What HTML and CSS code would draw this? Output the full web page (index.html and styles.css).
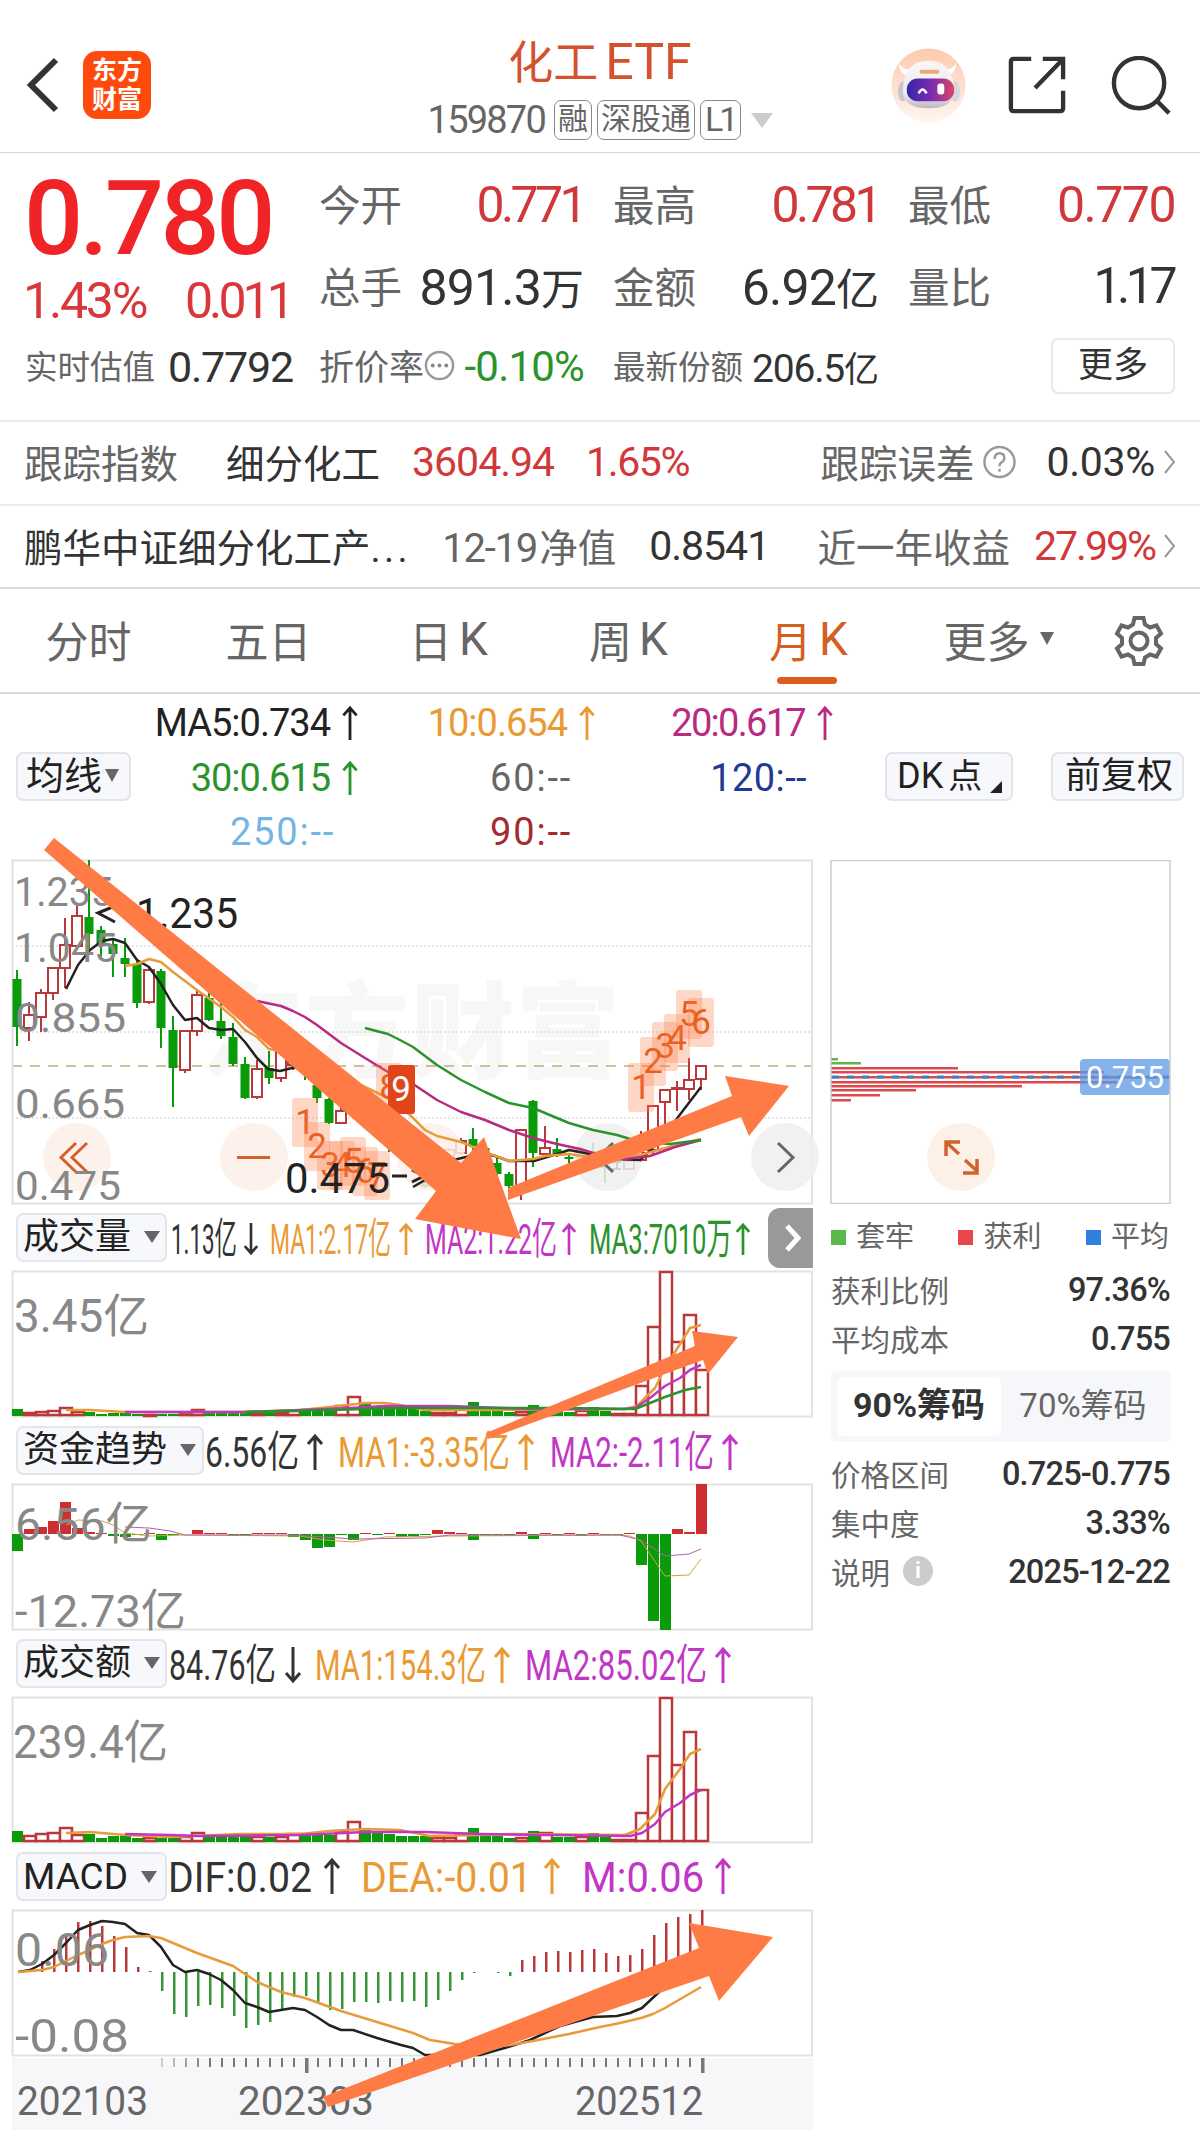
FILE: index.html
```
<!DOCTYPE html>
<html lang="zh-CN">
<head>
  <meta charset="UTF-8">
  <meta name="viewport" content="width=device-width, initial-scale=1.0">
  <title>化工ETF 159870</title>
  <link rel="stylesheet" href="styles.css">
</head>
<body>
  <svg class="defs" width="0" height="0">
    <symbol id="up" viewBox="0 0 18 38"><path d="M9 37V3M2 11L9 3l7 8" fill="none" stroke="currentColor" stroke-width="3"/></symbol>
    <symbol id="down" viewBox="0 0 18 38"><path d="M9 1v34M2 27l7 8 7-8" fill="none" stroke="currentColor" stroke-width="3"/></symbol>
  </svg>

  <header class="header">
    <div class="header-left">
      <svg class="back" viewBox="0 0 32 54"><path d="M29 2L4 27l25 25" fill="none" stroke="#333" stroke-width="6"/></svg>
      <div class="logo"><span>东方</span><span>财富</span></div>
    </div>
    <div class="title">
      <h1>化工<span>ETF</span></h1>
      <div class="code">
        <span class="code-num">159870</span>
        <span class="tag">融</span>
        <span class="tag">深股通</span>
        <span class="tag l1">L1</span>
        <i class="caret-light"></i>
      </div>
    </div>
    <div class="header-right">
      <svg class="robot" viewBox="0 0 76 76">
        <defs>
          <linearGradient id="bg" x1="0" y1="0" x2="0" y2="1"><stop offset="0" stop-color="#fdc9ad"/><stop offset="1" stop-color="#fff6f0"/></linearGradient>
          <linearGradient id="face" x1="0" y1="0" x2="1" y2="0"><stop offset="0" stop-color="#3427a6"/><stop offset=".5" stop-color="#7a2bb0"/><stop offset="1" stop-color="#dc4568"/></linearGradient>
          <linearGradient id="shell" x1="0" y1="0" x2="0" y2="1"><stop offset="0" stop-color="#fbf7f6"/><stop offset=".7" stop-color="#eceaee"/><stop offset="1" stop-color="#bdb8c4"/></linearGradient>
        </defs>
        <circle cx="38" cy="38" r="37.5" fill="url(#bg)"/>
        <path d="M8 16q0 8 6 11l8-5q-9 1-14-6zM66 16q0 8-6 11l-8-5q9 1 14-6z" fill="#fff"/>
        <ellipse cx="12" cy="44" rx="5" ry="10" fill="#c9c6cf"/>
        <ellipse cx="65" cy="44" rx="5" ry="10" fill="#d8d5dc"/>
        <path d="M12 43Q13 13 38 13t26 30q0 18-26 18T12 43z" fill="url(#shell)"/>
        <rect x="29" y="22" width="20" height="4" rx="2" fill="#eda878"/>
        <rect x="16" y="31" width="48" height="23" rx="11" fill="url(#face)"/>
        <path d="M28 46q4-8 8 0" fill="none" stroke="#fff" stroke-width="2.5"/>
        <rect x="47" y="36" width="7" height="11" rx="3" fill="#fff"/>
      </svg>
      <svg class="share" viewBox="0 0 60 60" fill="none" stroke="#333" stroke-width="4.5"><path d="M24 3H6q-3 0-3 3v48q0 3 3 3h48q3 0 3-3V36M36 3h21v21M57 3L28 33"/></svg>
      <svg class="search" viewBox="0 0 62 62" fill="none" stroke="#333" stroke-width="4.5"><circle cx="29" cy="28" r="26"/><path d="M47 46l13 13"/></svg>
    </div>
  </header>

  <section class="quote">
    <div class="price-box">
      <div class="price">0.780</div>
      <div class="change"><span>1.43%</span><span class="tight">0.011</span></div>
    </div>
    <div class="cell"><span class="k">今开</span><span class="v red">0.771</span></div>
    <div class="cell"><span class="k">最高</span><span class="v red">0.781</span></div>
    <div class="cell"><span class="k">最低</span><span class="v red w">0.770</span></div>
    <div class="cell"><span class="k">总手</span><span class="v n">891.3<b>万</b></span></div>
    <div class="cell"><span class="k">金额</span><span class="v n">6.92<b>亿</b></span></div>
    <div class="cell"><span class="k">量比</span><span class="v t">1.17</span></div>
    <div class="cell small first"><span class="k">实时估值</span><span class="v">0.7792</span></div>
    <div class="cell small rate">
      <span class="k">折价率</span>
      <svg class="dots" viewBox="0 0 32 32"><circle cx="16" cy="16" r="14" fill="none" stroke="#999" stroke-width="2.5"/><circle cx="9" cy="16" r="2" fill="#888"/><circle cx="16" cy="16" r="2" fill="#888"/><circle cx="23" cy="16" r="2" fill="#888"/></svg>
      <span class="v green">-0.10%</span>
    </div>
    <div class="cell small share-amt"><span class="k">最新份额</span><span class="v">206.5<b>亿</b></span></div>
    <div class="cell last"><button class="more">更多</button></div>
  </section>

  <section class="info">
    <span class="k index-k">跟踪指数</span>
    <span class="index-name">细分化工</span>
    <span class="num red index-v">3604.94</span>
    <span class="num red">1.65%</span>
    <span class="right">
      <span class="k">跟踪误差</span>
      <svg class="help" viewBox="0 0 34 34"><circle cx="17" cy="17" r="15.5" fill="none" stroke="#999" stroke-width="2.5"/><path d="M12 14q0-6 5-6t5 5q0 3-3 4.500-2 1-2 4M17 24v3" fill="none" stroke="#999" stroke-width="2.500"/></svg>
      <span class="num err">0.03%</span>
      <svg class="chev" viewBox="0 0 12 24"><path d="M1 1l9 11-9 11" fill="none" stroke="#999" stroke-width="2"/></svg>
    </span>
  </section>
  <section class="info fund">
    <span class="fund-name">鹏华中证细分化工产<b>...</b></span>
    <span class="k date"><span class="num">12-19</span>净值</span>
    <span class="num nav">0.8541</span>
    <span class="right">
      <span class="k">近一年收益</span>
      <span class="num red ret">27.99%</span>
      <svg class="chev" viewBox="0 0 12 24"><path d="M1 1l9 11-9 11" fill="none" stroke="#999" stroke-width="2"/></svg>
    </span>
  </section>

  <nav class="tabs">
    <a>分时</a>
    <a>五日</a>
    <a>日<span>K</span></a>
    <a>周<span>K</span></a>
    <a class="active">月<span>K</span></a>
    <a>更多<i class="caret"></i></a>
    <svg class="gear" viewBox="0 0 52 52" fill="none" stroke="#666" stroke-width="4"><path d="M21.500 3h9l1.500 6.500 5 3 6.500-2 4.500 8-5 4.500v6l5 4.500-4.500 8-6.500-2-5 3L30.500 49h-9L20 42.500l-5-3-6.500 2-4.500-8L9 29v-6l-5-4.500 4.500-8 6.500 2 5-3z"/><circle cx="26" cy="26" r="8.500"/></svg>
  </nav>

  <section class="ma">
    <button class="btn ma-btn">均线<i class="caret"></i></button>
    <div class="ma-grid">
      <span class="c5">MA5:0.734<svg><use href="#up"/></svg></span>
      <span class="c10">10:0.654<svg><use href="#up"/></svg></span>
      <span class="c20">20:0.617<svg><use href="#up"/></svg></span>
      <span class="c30">30:0.615<svg><use href="#up"/></svg></span>
      <span class="c60 flat">60:--</span>
      <span class="c120 flat">120:--</span>
      <span class="c250 flat">250:--</span>
      <span class="c90 flat">90:--</span>
    </div>
    <button class="btn dk">DK<b>点</b><i></i></button>
    <button class="btn adj">前复权</button>
  </section>

  <main class="main">
    <div class="charts">
      <svg id="kline" class="panel kline" viewBox="12 10 801 344"></svg>

      <div class="bar">
        <button class="btn">成交量<i class="caret"></i></button>
        <svg class="legend" viewBox="168 0 600 66">
          <text x="171" y="49" textLength="66" lengthAdjust="spacingAndGlyphs">1.13亿</text><use href="#down" x="243" y="15" width="16" height="38"/>
          <g class="c10"><text x="270" y="49" textLength="121" lengthAdjust="spacingAndGlyphs">MA1:2.17亿</text><use href="#up" x="398" y="15" width="16" height="38"/></g>
          <g class="cm"><text x="425" y="49" textLength="132" lengthAdjust="spacingAndGlyphs">MA2:1.22亿</text><use href="#up" x="561" y="15" width="16" height="38"/></g>
          <g class="c30"><text x="589" y="49" textLength="143" lengthAdjust="spacingAndGlyphs">MA3:7010万</text><use href="#up" x="735" y="15" width="16" height="38"/></g>
        </svg>
        <button class="next"><svg viewBox="0 0 16 28"><path d="M2 2l11 12L2 26" fill="none" stroke="#fff" stroke-width="5"/></svg></button>
      </div>
      <svg id="vol" class="panel" viewBox="12 0 801 146"></svg>

      <div class="bar wide">
        <button class="btn">资金趋势<i class="caret"></i></button>
        <svg class="legend" viewBox="205 0 600 66">
          <text x="205" y="49" textLength="94" lengthAdjust="spacingAndGlyphs">6.56亿</text><use href="#up" x="306" y="15" width="18" height="38"/>
          <g class="c10"><text x="338" y="49" textLength="172" lengthAdjust="spacingAndGlyphs">MA1:-3.35亿</text><use href="#up" x="517" y="15" width="18" height="38"/></g>
          <g class="cm"><text x="550" y="49" textLength="164" lengthAdjust="spacingAndGlyphs">MA2:-2.11亿</text><use href="#up" x="721" y="15" width="18" height="38"/></g>
        </svg>
      </div>
      <svg id="flow" class="panel" viewBox="12 0 801 146"></svg>

      <div class="bar">
        <button class="btn">成交额<i class="caret"></i></button>
        <svg class="legend" viewBox="168 0 600 66">
          <text x="169" y="49" textLength="107" lengthAdjust="spacingAndGlyphs">84.76亿</text><use href="#down" x="284" y="15" width="18" height="38"/>
          <g class="c10"><text x="315" y="49" textLength="171" lengthAdjust="spacingAndGlyphs">MA1:154.3亿</text><use href="#up" x="493" y="15" width="18" height="38"/></g>
          <g class="cm"><text x="525" y="49" textLength="182" lengthAdjust="spacingAndGlyphs">MA2:85.02亿</text><use href="#up" x="714" y="15" width="18" height="38"/></g>
        </svg>
      </div>
      <svg id="amt" class="panel" viewBox="12 0 801 146"></svg>

      <div class="bar">
        <button class="btn macd-btn">MACD<i class="caret"></i></button>
        <svg class="legend" viewBox="168 0 600 66">
          <text x="168" y="48" textLength="144" lengthAdjust="spacingAndGlyphs">DIF:0.02</text><use href="#up" x="323" y="13" width="18" height="38"/>
          <g class="c10"><text x="361" y="48" textLength="171" lengthAdjust="spacingAndGlyphs">DEA:-0.01</text><use href="#up" x="543" y="13" width="18" height="38"/></g>
          <g class="cm"><text x="582" y="48" textLength="122" lengthAdjust="spacingAndGlyphs">M:0.06</text><use href="#up" x="714" y="13" width="18" height="38"/></g>
        </svg>
      </div>
      <svg id="macd" class="panel" viewBox="12 0 801 146"></svg>
      <svg id="axis" class="axis" viewBox="12 0 801 73"></svg>

      <!-- trend arrows drawn over the panels -->
      <svg class="trend" viewBox="0 830 830 1300" fill="#ff7b45">
        <path d="M54 838L461 1163l23-26 37 102-106-20 21-28L44 850z"/>
        <path d="M508 1188L732 1096l-7-20 64 10-40 50-8-19-233 83z"/>
        <path d="M486 1433L695 1346l-3-15 46 6-30 37-5-14-215 79z"/>
        <path d="M323 2097L699 1948l-10-25 84 14-54 64-10-25-381 131z"/>
      </svg>
    </div>

    <aside class="chips">
      <svg class="chip-chart" viewBox="830 10 341 344">
        <g id="chipBars"></g>
        <path d="M832 227h338" stroke="#3f7fd6" stroke-width="3" stroke-dasharray="7 8"/>
        <rect x="1080" y="209" width="90" height="36" rx="4" fill="#5b98e3" fill-opacity=".75"/>
        <text x="1086" y="238" textLength="78" font-size="31" fill="#fff">0.755</text>
        <circle cx="961" cy="307" r="34" fill="#fdf0e6"/>
        <path d="M959 304l-12-11M946 306v-14h14M965 310l12 11M963 323h14v-14" fill="none" stroke="#d2622c" stroke-width="3.500"/>
        <rect x="831" y="10.500" width="339" height="343" fill="none" stroke="#ccc" stroke-width="1.500"/>
      </svg>
      <div class="chip-legend">
        <span><i class="g"></i>套牢</span>
        <span><i class="r"></i>获利</span>
        <span><i class="b"></i>平均</span>
      </div>
      <dl>
        <div><dt>获利比例</dt><dd>97.36%</dd></div>
        <div><dt>平均成本</dt><dd>0.755</dd></div>
      </dl>
      <div class="toggle"><span class="on">90%筹码</span><span>70%筹码</span></div>
      <dl>
        <div><dt>价格区间</dt><dd>0.725-0.775</dd></div>
        <div><dt>集中度</dt><dd>3.33%</dd></div>
        <div><dt>说明<i class="tip">i</i></dt><dd>2025-12-22</dd></div>
      </dl>
    </aside>
  </main>

  <script src="charts.js"></script>
</body>
</html>
```
FILE: styles.css
```
:root {
  --text: #333;
  --gray: #666;
  --red: #d0383a;
  --green: #2b932b;
  --orange: #e99a35;
  --magenta: #c236c6;
  --line: #d8d8d8;
}

* {
  box-sizing: border-box;
  margin: 0;
  padding: 0;
}

body {
  width: 1200px;
  height: 2130px;
  overflow: hidden;
  background: #fff;
  color: var(--text);
  font-family: Roboto, "Noto Sans CJK SC", sans-serif;
}

svg { display: block; }
.defs { position: absolute; }

button {
  font: inherit;
  color: inherit;
  border: none;
  background: none;
}

b, i {
  font-weight: inherit;
  font-style: normal;
}

.red { color: var(--red); }
.green { color: var(--green); }
.k { color: var(--gray); }

/* header */
.header {
  display: grid;
  grid-template-columns: 400px 1fr 400px;
  height: 153px;
  border-bottom: 1px solid var(--line);
}

.header-left {
  display: flex;
  align-items: center;
  height: 170px;
  padding-left: 27px;
}

.back {
  width: 32px;
  height: 56px;
}

.logo {
  display: flex;
  flex-direction: column;
  justify-content: center;
  width: 68px;
  height: 68px;
  margin-left: 24px;
  border-radius: 14px;
  background: #fe4a0c;
  color: #fff;
  font-size: 25px;
  font-weight: 700;
  line-height: 29px;
  text-align: center;
}

.title {
  padding-top: 32px;
  text-align: center;
}

.title h1 {
  height: 63px;
  color: #d4512e;
  font-size: 45px;
  font-weight: 400;
  line-height: 60px;
}

.title h1 span {
  margin-left: 7px;
  font-size: 50px;
  letter-spacing: 0;
}

.code {
  display: flex;
  align-items: center;
  justify-content: center;
  height: 50px;
  padding-left: 1px;
  color: var(--gray);
}

.code-num {
  margin-right: 9px;
  font-size: 38px;
  letter-spacing: -1.8px;
}

.tag {
  height: 40px;
  margin-right: 5px;
  padding: 0 3px;
  border: 1.5px solid #888;
  border-radius: 7px;
  font-size: 30px;
  line-height: 36px;
}

.tag.l1 {
  padding: 0 4px;
  font-size: 34px;
  letter-spacing: -4px;
  padding-right: 6px;
}

.caret-light {
  margin-left: 5px;
  border: 11px solid transparent;
  border-top: 15px solid #ccc;
  border-bottom: 0;
}

.header-right {
  display: flex;
  align-items: center;
  height: 170px;
  padding-left: 91px;
}

.robot { width: 75px; height: 75px; }
.share { width: 58px; height: 58px; margin-left: 42px; }
.search { width: 60px; height: 60px; margin-left: 45px; margin-top: 2px; }

/* quote */
.quote {
  display: grid;
  grid-template-columns: 265px 265px 266px 267px;
  grid-template-rows: 81px 82px 78px;
  column-gap: 29px;
  height: 269px;
  padding: 12px 24px 0 25px;
  border-bottom: 2px solid #ececec;
}

.price-box {
  grid-row: 1 / 3;
}

.price {
  height: 103px;
  margin-left: -1px;
  color: #f02427;
  font-size: 104px;
  font-weight: 500;
  line-height: 107px;
  letter-spacing: -3.5px;
}

.change {
  display: flex;
  justify-content: space-between;
  width: 268px;
  margin-left: -2px;
  color: #d9373a;
  font-size: 50px;
  line-height: 66px;
  letter-spacing: -2.2px;
}

.change .tight { letter-spacing: -3.9px; }

.cell {
  display: flex;
  align-items: center;
  justify-content: space-between;
  white-space: nowrap;
}

.cell .k {
  padding-bottom: 5px;
  font-size: 41.500px;
}

.cell .v {
  padding-bottom: 1px;
  font-size: 50px;
  letter-spacing: -3.6px;
}

.cell .v.w { letter-spacing: -1.5px; }
.cell .v.n { padding-bottom: 3px; letter-spacing: -.8px; }
.cell .v.t { padding-bottom: 3px; letter-spacing: -4.5px; padding-right: 2px; }
.cell .v b { font-size: 43px; letter-spacing: 0; }
.cell.small .k { padding-bottom: 5px; font-size: 32.500px; }
.cell.small .v { font-size: 43px; letter-spacing: -1.200px; }
.cell.first { width: 268px; }
.cell.rate .k { font-size: 35px; }
.cell.rate .v { font-size: 42px; letter-spacing: -.8px; }
.cell.share-amt .v { font-size: 39px; }
.cell.share-amt .v b { font-size: 35px; }
.cell.last { justify-content: flex-end; }

.dots {
  width: 31px;
  height: 31px;
  margin: 0 auto 4px 0;
}

.more {
  width: 124px;
  height: 56px;
  margin-bottom: 3px;
  border: 2px solid #e9e9e9;
  border-radius: 7px;
  font-size: 35px;
  line-height: 50px;
}

/* index and fund rows */
.info {
  display: flex;
  align-items: center;
  height: 84px;
  padding: 0 24px 2px 24px;
  border-bottom: 2px solid #ececec;
  font-size: 38.500px;
  white-space: nowrap;
}

.info > span,
.info .right .k {
  padding-bottom: 2px;
}

.info > .num { padding-bottom: 0; }

.info.fund {
  height: 83px;
  border-bottom-color: var(--line);
}

.fund-name b { letter-spacing: 3.4px; }

.num {
  font-size: 41px;
  letter-spacing: -1.400px;
}

.index-name { margin-left: 48px; }
.index-v { margin: 0 32px 0 32px; letter-spacing: -1px; }

.info .right {
  display: flex;
  align-items: center;
  margin-left: auto;
  padding-bottom: 0;
}

.help {
  width: 33px;
  height: 34px;
  margin: 0 31px 0 8px;
}

.chev {
  width: 12px;
  height: 26px;
  margin-left: 9px;
}

.err { letter-spacing: -.3px; }
.date { margin-left: 31px; }
.date .num { margin-right: 2px; font-size: 40px; letter-spacing: -1.2px; }
.nav { margin-left: 33px; letter-spacing: -1px; }
.ret { margin-left: 24px; letter-spacing: -2px; }

/* period tabs */
.tabs {
  display: flex;
  align-items: center;
  height: 105px;
  border-bottom: 2px solid var(--line);
  color: var(--gray);
  font-size: 43px;
}

.tabs a {
  display: flex;
  position: relative;
  align-items: center;
  justify-content: center;
  width: 180px;
  height: 100%;
  padding: 0 3px 4px 0;
}

.tabs a span { margin-left: 7px; font-size: 46px; }
.tabs a:nth-child(6) { width: 200px; }

.tabs .active {
  color: #d55f22;
}

.tabs .active::after {
  content: "";
  position: absolute;
  bottom: 8px;
  left: 57px;
  width: 60px;
  height: 7px;
  border-radius: 4px;
  background: #dd5d1b;
}

.caret {
  display: inline-block;
  border: 7px solid transparent;
  border-top: 13px solid var(--gray);
  border-bottom: 0;
}

.tabs .caret { margin-left: 10px; }

.gear {
  width: 52px;
  height: 54px;
  margin-left: 13px;
}

/* moving averages */
.btn {
  display: flex;
  align-items: center;
  height: 49px;
  padding-bottom: 2px;
  border: 2px solid #e3e5ea;
  border-radius: 7px;
  background: #f7f8fb;
  color: #222;
  font-size: 36px;
  line-height: 42px;
}

.ma {
  display: flex;
  align-items: center;
  height: 166px;
  padding: 0 16px 1px;
}

.ma-btn {
  width: 115px;
  padding-left: 8px;
  font-size: 38px;
}

.ma-btn .caret { margin-left: 3px; }

.ma-grid {
  display: grid;
  grid-template-columns: 228px 237px 238px;
  grid-auto-rows: 54.500px;
  margin-top: 2px;
  font-size: 38px;
}

.ma-grid span {
  display: flex;
  align-items: center;
  justify-content: flex-end;
  letter-spacing: -1px;
}

.ma-grid svg {
  width: 18px;
  height: 36px;
  margin-left: 11px;
}

.ma-grid .c20 { letter-spacing: -1.7px; }

.ma-grid .flat {
  padding-right: 24px;
  letter-spacing: 1.8px;
}

.ma-grid .c120 {
  padding-right: 27px;
  letter-spacing: .4px;
}

.c5 { color: #222; }
.c10 { color: var(--orange); }
.c20 { color: #b92a80; }
.c30 { color: var(--green); }
.c60 { color: var(--gray); }
.c120 { color: #233a93; }
.c250 { color: #74b5e4; }
.c90 { color: #a52a30; }
.cm { color: var(--magenta); }

.dk {
  width: 128px;
  margin-left: 51px;
  padding-left: 10px;
}

.dk b { margin-left: 5px; font-size: 34px; }

.dk i {
  align-self: flex-end;
  margin: 0 0 4px 8px;
  border-bottom: 12px solid #222;
  border-left: 12px solid transparent;
}

.adj {
  width: 133px;
  margin-left: 38px;
  padding-left: 12px;
}

/* charts */
.main {
  display: flex;
  gap: 17px;
  padding-left: 12px;
}

.charts {
  position: relative;
  width: 801px;
}

.panel {
  width: 801px;
  height: 146px;
  overflow: visible;
}

.kline { height: 344px; }

.panel text,
.axis text,
.legend text,
.chip-chart text {
  font-family: Roboto, "Noto Sans CJK SC", sans-serif;
}

.panel .scale { fill: #888; }

.bar {
  display: flex;
  align-items: center;
  height: 67px;
  padding-left: 4px;
}

.bar .btn {
  flex: none;
  width: 151px;
  padding-left: 5px;
}

.bar .btn .caret { margin-left: 13px; border-width: 12px 8px 0; }
.bar.wide .btn { width: 188px; }
.bar .macd-btn { padding-bottom: 0; font-size: 37px; }

.legend {
  flex: none;
  width: 600px;
  height: 66px;
  margin-left: 1px;
  font-size: 43px;
}

.legend text {
  fill: currentColor;
}

.next {
  display: flex;
  flex: none;
  align-items: center;
  justify-content: center;
  width: 45px;
  height: 60px;
  border-radius: 12px 0 0 12px;
  background: #999;
}

.next svg { width: 16px; height: 28px; margin-left: 5px; }

.axis {
  width: 801px;
  height: 73px;
  margin-top: 2px;
  background: #f7f7fa;
}

.trend {
  position: absolute;
  top: -30px;
  left: -12px;
  width: 830px;
  height: 1300px;
}

/* chip distribution */
.chips { width: 341px; }

.chip-chart {
  width: 341px;
  height: 344px;
}

.chip-legend {
  display: flex;
  justify-content: space-between;
  height: 62px;
  padding: 2px 2px 0 1px;
  color: var(--gray);
  font-size: 29px;
  line-height: 62px;
}

.chip-legend i {
  display: inline-block;
  width: 15px;
  height: 15px;
  margin-right: 10px;
  vertical-align: 2px;
}

.chip-legend .g { background: #5ab948; }
.chip-legend .r { background: #ea4848; }
.chip-legend .b { background: #3180e0; }

dl div {
  display: flex;
  align-items: center;
  justify-content: space-between;
  height: 49px;
  padding: 0 1px 2px 1px;
}

dt {
  display: flex;
  align-items: center;
  padding-bottom: 2px;
  color: var(--gray);
  font-size: 29.500px;
}

dd {
  font-size: 32.500px;
  font-weight: 500;
  letter-spacing: -.8px;
}

.tip {
  width: 30px;
  height: 30px;
  margin-left: 13px;
  border-radius: 50%;
  background: #ccc;
  color: #fff;
  font-size: 22px;
  font-weight: 700;
  line-height: 30px;
  text-align: center;
}

.toggle {
  display: flex;
  height: 71px;
  margin: 7px 0 8px 1px;
  padding: 6px;
  border-radius: 6px;
  background: #f6f7fa;
  color: var(--gray);
  font-size: 33px;
  line-height: 57px;
}

.toggle span {
  flex: 1;
  text-align: center;
}

.toggle .on {
  border-radius: 6px;
  background: #fff;
  color: var(--text);
  font-size: 34px;
  font-weight: 700;
}
```
FILE: charts.js
```
const RED = '#b9383a', GREEN = '#0a9b0a', ORANGE = '#e89b3a', MAGENTA = '#c236c6', DGREEN = '#2b932b';
const X0 = 17, STEP = 12;

function $(id) { return document.getElementById(id); }

function rect(x, y, w, h, attrs) {
  return `<rect x="${x}" y="${y}" width="${w}" height="${h}" ${attrs}/>`;
}

function line(points, color, width) {
  return `<polyline points="${points}" fill="none" stroke="${color}" stroke-width="${width}" stroke-linejoin="round"/>`;
}

function text(x, y, w, size, str, attrs) {
  return `<text x="${x}" y="${y}" textLength="${w}" lengthAdjust="spacingAndGlyphs" font-size="${size}" ${attrs || 'class="scale"'}>${str}</text>`;
}

function frame(y, h) {
  return rect(12.5, y + 0.5, 799.5, h - 1, 'fill="none" stroke="#e2e2e2" stroke-width="2"');
}

// [up/down, body top, body bottom, high, low]
const candles = [
  ['g',129,177,120,196],['r',165,178,152,191],['r',143,167,139,182],['r',118,143,117,150],['r',95,118,68,138],
  ['r',66,96,55,100],['g',67,84,10,102],['g',80,95,76,108],['g',94,104,90,127],['g',108,114,88,127],
  ['g',114,153,110,158],['r',120,152,118,154],['g',121,178,119,198],['g',180,218,166,257],['r',181,220,180,223],
  ['r',145,181,140,186],['g',148,170,143,171],['g',171,186,153,189],['g',187,214,173,216],['g',214,248,207,249],
  ['r',219,247,210,249],['g',218,228,201,234],['r',200,228,195,232],['r',200,215,195,220],['g',212,222,205,230],
  ['g',235,248,225,253],['g',249,273,248,274],['r',261,273,255,274],['r',250,262,246,266],['g',255,270,250,275],
  ['g',262,276,258,280],['g',270,285,265,302],['g',280,292,275,298],['g',296,310,290,315],['g',325,337,318,338],
  ['r',312,325,308,328],['r',300,308,298,310],['r',291,303,288,305],['g',289,296,278,300],['g',298,306,295,310],
  ['g',313,324,307,326],['g',324,336,322,338],['r',280,340,279,350],['g',251,303,250,317],['r',298,304,276,308],
  ['g',299,304,288,307],['g',307,309,303,313],['r',300,307,297,309],['g',301,308,293,312],['g',316,318,300,333],
  ['k',312,319,312,319],['r',311,319,305,320],['r',303,310,281,312],['r',256,300,255,305],['r',240,252,239,275],
  ['r',238,239,231,261],['r',230,239,208,250],['r',216,229,215,240]
];

function badge(n, x, y) {
  return rect(x, y, 26, 49, 'rx="3" fill="#ff7b45" fill-opacity=".3"') +
    `<text x="${x + 13}" y="${y + 36}" font-size="35" text-anchor="middle" fill="#e8601f">${n}</text>`;
}

function drawKline() {
  let s = '';
  s += `<text x="200" y="220" textLength="420" font-size="104" font-weight="900" fill="#f7f7f7">东方财富</text>`;
  [96, 182, 268].forEach(y => {
    s += `<path d="M12 ${y}H812" stroke="#ddd" stroke-width="1.5" stroke-dasharray="2 2"/>`;
  });
  s += `<path d="M12 216H812" stroke="#d3bf9c" stroke-width="2" stroke-dasharray="10 8"/>`;
  s += frame(10, 344);

  candles.forEach((c, i) => {
    const x = X0 + i * STEP;
    const [t, top, bot, hi, lo] = c;
    if (t === 'k') {
      s += `<path d="M${x - 5} 312h9M${x - 5} 319h9M${x} 312v7" stroke="#222" stroke-width="2"/>`;
    } else if (t === 'g') {
      s += rect(x - 1, hi, 2, lo - hi, `fill="${GREEN}"`) + rect(x - 4.5, top, 9, bot - top, `fill="${GREEN}"`);
    } else {
      s += `<path d="M${x} ${hi}V${top}M${x} ${bot}V${lo}" stroke="${RED}" stroke-width="2"/>`;
      s += rect(x - 5, top, 10, bot - top, `fill="#fff" stroke="${RED}" stroke-width="2"`);
    }
  });

  // paging buttons
  [[77, '#fdf0e7'], [254, '#fdf0e7'], [431, '#fdf0e7'], [608, '#eee'], [785, '#eee']].forEach(b => {
    s += `<circle cx="${b[0]}" cy="307" r="34" fill="${b[1]}" fill-opacity=".85"/>`;
  });
  s += `<path d="M76 293L61 307.500l15 14.500M87 293L72 307.500l15 14.500M237 307.500h33" fill="none" stroke="#d2622c" stroke-width="3"/>`;
  s += `<path d="M613 293L598 307.500l15 14.500M778 293l15 14.500-15 14.500" fill="none" stroke="#666" stroke-width="3"/>`;

  s += line('66,139 78,115 90,100 102,91 113,89 125,93 137,110 149,117 161,134 173,155 185,170 197,168 209,178 221,180 233,179 245,192 257,208 268,219 280,221 292,218 310,215', '#222', 2.5);
  s += line('413,337 425,330 445,312 466,307 480,303 495,306 509,311 534,311 557,304 569,300 590,304 617,309 640,310 650,301 672,275 701,237', '#222', 2.5);
  s += line('125,116 137,114 149,109 161,112 173,122 197,140 221,157 233,167 245,180 257,187 269,199 290,203 340,230 363,236 388,248 410,265 425,280 437,286 461,292 485,302 509,311 533,309 545,306 569,304 590,307 617,307 641,305 665,298 701,289', ORANGE, 2.5);
  s += line('257,151 281,156 293,161 305,167 317,175 341,193 365,208 388,222 413,234 437,250 461,262 485,270 509,280 533,288 557,294 580,299 600,305 625,309 650,306 675,297 701,290', '#b92a80', 2.5);
  s += line('365,178 388,184 400,190 413,197 437,215 461,230 485,242 509,253 533,258 545,263 569,273 593,280 617,285 640,292 670,294 701,290', DGREEN, 2.5);

  [[1,292,248],[2,304,272],[3,317,291],[4,329,291],[5,340,287],[6,352,297],[7,364,301],[8,376,213],
   [1,628,213],[2,640,187],[3,652,172],[4,664,164],[5,676,140],[6,688,148]].forEach(b => {
    s += badge(b[0], b[1], b[2]);
  });
  s += rect(388, 215, 27, 49, 'rx="3" fill="#e2441a"') + `<text x="401" y="251" font-size="35" text-anchor="middle" fill="#fff">9</text>`;

  s += text(14, 56, 99, 41, '1.235') + text(14, 112, 103, 41, '1.045') + text(15, 182, 111, 41, '0.855');
  s += text(15, 268, 110, 41, '0.665') + text(15, 350, 106, 41, '0.475');
  s += text(136, 78, 102, 43, '1.235', 'fill="#222"') + text(285, 343, 105, 43, '0.475', 'fill="#222"');
  s += `<path d="M115 56L98 63l17 9M392 326h15M412 320l12 6-12 6" fill="none" stroke="#222" stroke-width="3"/>`;
  $('kline').innerHTML = s;
}

function drawBars(id, heights, lines, label) {
  let s = frame(0, 146);
  heights.forEach((h, i) => {
    const x = X0 + i * STEP;
    if (candles[i][0] === 'g') {
      s += rect(x - 5, 145 - h, 11, h, `fill="${GREEN}"`);
    } else {
      s += rect(x - 5, 145 - h + 1, 12, Math.max(h - 2, 1), `fill="#fff" stroke="${RED}" stroke-width="2.5"`);
    }
  });
  lines.forEach(l => { s += line(l[0], l[1], 2.5); });
  $(id).innerHTML = s + label;
}

const vol = [7,4,5,6,9,5,4,2,3,3,2,2,2,2,3,7,3,3,3,4,3,4,4,6,5,8,6,11,20,13,10,9,8,7,5,4,4,9,14,7,6,4,5,11,8,5,4,6,9,5,3,3,31,90,145,75,102,47];
const amt = [11,7,9,10,15,8,8,4,6,6,4,5,4,4,6,10,5,5,5,6,6,5,6,9,8,10,7,12,21,14,10,8,6,6,6,5,5,9,14,6,6,4,5,11,10,5,5,6,9,5,3,3,30,87,145,78,111,53];
const flow = [-17,5,7,13,32,6,2,1,-2,-3,-1,1,-6,-1,0,4,1,1,-2,-2,1,1,1,-3,-6,-14,-13,-1,-6,1,-1,1,-3,-2,-1,4,2,1,-6,-1,-1,-1,2,-5,1,-1,1,-2,1,-1,-1,1,-31,-87,-96,5,2,50];
const macd = [0,0,11,23,36,50,51,46,36,25,5,1,-19,-42,-45,-34,-33,-36,-44,-56,-53,-50,-38,-25,-24,-30,-38,-37,-30,-30,-31,-29,-30,-29,-35,-28,-19,-8,-1,0,-1,-4,12,16,20,21,20,22,23,19,16,17,23,37,49,55,58,62];

function drawFlow() {
  let s = frame(0, 146);
  flow.forEach((v, i) => {
    s += rect(X0 - 5 + i * STEP, v > 0 ? 50 - v : 50, 11, Math.abs(v), `fill="${v > 0 ? '#cf2e31' : GREEN}"`);
  });
  s += line('66,41 78,36 102,37 113,41 125,49 150,52 185,51 300,52 325,56 353,58 385,53 450,52 620,51 630,52 641,57 665,92 689,91 701,75', '#d2a53c', 1);
  s += line('125,43 149,44 170,47 185,51 290,51 325,53 353,55 425,54 450,51 620,51 641,56 665,72 689,70 701,65', '#b35fae', 1);
  s += text(15, 56, 137, 45, '6.56亿') + text(15, 143, 171, 45, '-12.73亿');
  $('flow').innerHTML = s;
}

function drawMacd() {
  let s = frame(0, 146);
  macd.forEach((v, i) => {
    s += rect(17 + i * STEP, v > 0 ? 62 - v : 62, 2.5, Math.abs(v), `fill="${v > 0 ? RED : '#379637'}"`);
  });
  s += line('18,62 30,60 42,54 54,45 66,33 78,20 90,15 102,11 113,12 125,14 137,23 149,25 161,37 173,55 185,62 197,60 209,64 221,70 233,80 245,93 257,97 269,102 281,100 293,98 305,100 317,107 329,115 341,120 353,120 377,128 401,135 413,138 425,145 450,145 480,145 508,137 530,130 560,116 593,107 617,106 630,103 642,98 658,83 675,70 701,45', '#222', 2.5);
  s += line('18,62 42,60 54,57 66,51 78,45 90,40 102,34 113,30 125,27 149,26 161,28 173,33 197,43 233,56 257,72 281,82 305,88 341,101 377,112 413,123 430,130 455,134 485,137 510,135 533,131 569,124 600,117 620,113 641,108 653,104 665,98 701,77', ORANGE, 2.5);
  s += text(15, 56, 94, 46, '0.06') + text(15, 142, 114, 46, '-0.08');
  $('macd').innerHTML = s;
}

function drawAxis() {
  let s = '';
  for (let i = 12; i < 58; i++) {
    const big = i === 24 || i === 57;
    s += rect(17 + i * STEP, 0, big ? 3.5 : 2, big ? 15 : 9, `fill="#777" opacity="${Math.min(1, (i - 10) / 6)}"`);
  }
  const fill = 'fill="#666"';
  s += text(17, 57, 131, 41, '202103', fill) + text(238, 57, 136, 41, '202303', fill) + text(575, 57, 128, 41, '202512', fill);
  $('axis').innerHTML = s;
}

function drawChips() {
  // [y, length, colour]
  const rows = [[209,7,'#5ab948'],[213,30,'#5ab948'],[218,127],[222,273],[227,338],[232,286],[236,191],[240,85],[245,49],[250,20]];
  $('chipBars').innerHTML = rows.map(r => rect(831, r[0] - 1, r[1], 2.5, `fill="${r[2] || '#da4a4c'}"`)).join('');
}

drawKline();
drawBars('vol', vol, [
  ['66,139 90,139 125,141 245,141 300,139 330,136 365,132 385,132 400,134 425,139 480,139 625,138 637,135 655,117 665,97 685,65 690,57 701,54', ORANGE],
  ['125,141 245,141 300,139 350,137 385,135 450,135 530,138 625,138 635,137 650,127 665,115 680,107 690,99 701,94', MAGENTA],
  ['245,141 330,139 400,137 470,137 560,137 635,138 650,132 665,126 685,119 701,116', DGREEN]
], text(14, 61, 135, 46, '3.45亿'));
drawFlow();
drawBars('amt', amt, [
  ['66,136 90,135 125,138 170,140 240,137 300,137 330,134 365,132 400,133 430,139 480,138 510,137 625,138 640,132 655,117 665,92 680,72 690,57 701,52', ORANGE],
  ['125,137 170,138 200,139 300,138 365,135 425,135 480,137 550,138 630,139 642,136 655,127 665,115 680,106 690,98 701,93', MAGENTA]
], text(13, 61, 155, 46, '239.4亿'));
drawMacd();
drawAxis();
drawChips();
```
